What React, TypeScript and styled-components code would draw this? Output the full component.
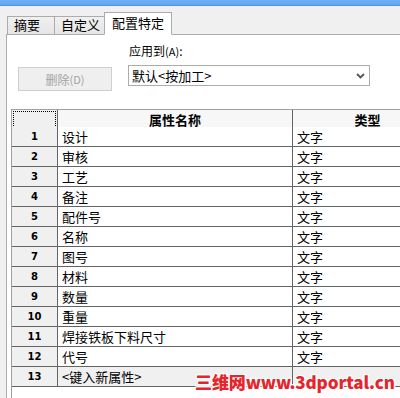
import React from "react";
import styled, { createGlobalStyle } from "styled-components";

const Global = createGlobalStyle`
  html, body { margin: 0; padding: 0; }
  body {
    width: 400px; height: 398px; overflow: hidden;
    background: #f0f0f0;
    font-family: "Noto Sans CJK SC", "Liberation Sans", sans-serif;
    font-size: 12px; color: #000;
  }
`;

const Window = styled.div`
  width: 400px; height: 398px; overflow: hidden; position: relative;
  display: flex; flex-direction: column;
`;

const TitleBar = styled.div`
  height: 6px; flex: none;
  background: linear-gradient(#6fb0f6, #62a6f2);
  border-bottom: 1px solid #4f94e2;
  box-sizing: border-box;
`;

const TabStrip = styled.div`
  height: 29px; flex: none; display: flex; align-items: flex-end;
  padding-left: 7px; box-sizing: border-box;
  position: relative; z-index: 1; margin-bottom: -1px;
`;

const Tab = styled.div<{ $active?: boolean; $w: number }>`
  width: ${(p) => p.$w}px; box-sizing: border-box;
  height: ${(p) => (p.$active ? 23 : 19)}px;
  border: 1px solid #acacac;
  border-bottom: ${(p) => (p.$active ? "1px solid #fff" : "1px solid #acacac")};
  margin-left: -1px;
  background: ${(p) => (p.$active ? "#fff" : "linear-gradient(#f0f0f0, #e5e5e5)")};
  font-size: 13px; line-height: ${(p) => (p.$active ? 19 : 16)}px;
  padding-left: ${(p) => (p.$active ? 7 : 6)}px;
  white-space: nowrap;
`;

const Panel = styled.div`
  flex: 1; background: #fff; margin-left: 6px;
  border-top: 1px solid #acacac; border-left: 1px solid #acacac;
  display: flex; flex-direction: column;
`;

const Controls = styled.div`
  display: flex; align-items: flex-start; height: 74px; flex: none;
`;

const DeleteButton = styled.div`
  margin: 32px 0 0 11px; width: 94px; height: 24px; box-sizing: border-box;
  border: 1px solid #cfcfcf; background: #efefef; color: #a3a3a3;
  display: flex; align-items: center; justify-content: center;
  font-size: 12px;
`;

const Small = styled.span`
  font-size: 11px;
`;

const ApplyGroup = styled.div`
  margin: 8px 0 0 16px; display: flex; flex-direction: column;
`;

const Label = styled.div`
  font-size: 12px; line-height: 16px; height: 22px; padding-left: 1px;
`;

const Combo = styled.div`
  width: 242px; height: 21px; box-sizing: border-box;
  border: 1px solid #acacac; background: #fff;
  display: flex; align-items: center; justify-content: space-between;
  padding: 0 4px 0 3px; font-size: 13px;
`;

const Grid = styled.div`
  margin-left: 4px; flex: 1;
  border-left: 1px solid #a0a0a0; border-top: 1px solid #a0a0a0;
  overflow: hidden;
`;

const Row = styled.div<{ $header?: boolean }>`
  display: grid; grid-template-columns: 46px 235px 150px;
  height: ${(p) => (p.$header ? 17 : 20)}px;
`;

const NumCell = styled.div<{ $corner?: boolean }>`
  background: #f0f0f0; box-sizing: border-box;
  border-right: 1px solid #646464; border-bottom: 1px solid #646464;
  display: flex; align-items: center; justify-content: center;
  font-family: "DejaVu Sans", sans-serif; font-weight: bold; font-size: 10px;
  position: relative;
  ${(p) => p.$corner && `
    &::after {
      content: ""; position: absolute; left: 1px; top: 1px; right: 1px; bottom: 1px;
      border: 1px dotted #000;
    }
  `}
`;

const HeadCell = styled.div`
  background: #f7f7f7; box-sizing: border-box;
  border-right: 1px solid #646464; border-bottom: 1px solid #646464;
  display: flex; align-items: center; justify-content: center;
  font-weight: bold; font-size: 13px;
`;

const DataCell = styled.div<{ $new?: boolean }>`
  background: ${(p) => (p.$new ? "#f0f0f0" : "#fff")};
  box-sizing: border-box;
  border-right: 1px solid #646464; border-bottom: 1px solid #646464;
  display: flex; align-items: center; padding-left: 4px;
  font-size: 13px; white-space: nowrap;
`;

const Watermark = styled.div`
  position: absolute; left: 195px; top: 369px;
  font-family: "Noto Sans CJK SC", "DejaVu Sans", sans-serif;
  font-weight: 900; font-size: 17px; color: #e4252b; letter-spacing: -0.1px;
  text-shadow: 1px 0 #fff, -1px 0 #fff, 0 1px #fff, 0 -1px #fff,
    1px 1px #fff, -1px -1px #fff, 1px -1px #fff, -1px 1px #fff;
  white-space: nowrap;
`;

const rows = [
  "设计", "审核", "工艺", "备注", "配件号", "名称", "图号",
  "材料", "数量", "重量", "焊接铁板下料尺寸", "代号",
];

export default function App() {
  return (
    <Window>
      <Global />
      <TitleBar />
      <TabStrip>
        <Tab $w={48} style={{ marginLeft: 0 }}>摘要</Tab>
        <Tab $w={51}>自定义</Tab>
        <Tab $w={68} $active>配置特定</Tab>
      </TabStrip>
      <Panel>
        <Controls>
          <DeleteButton>删除<Small>(D)</Small></DeleteButton>
          <ApplyGroup>
            <Label>应用到<Small>(A)</Small>:</Label>
            <Combo>
              <span>默认&lt;按加工&gt;</span>
              <svg width="9" height="6" viewBox="0 0 9 6">
                <path d="M1 1 L4.5 4.5 L8 1" fill="none" stroke="#555" strokeWidth="1.8" />
              </svg>
            </Combo>
          </ApplyGroup>
        </Controls>
        <Grid>
          <Row $header>
            <NumCell $corner />
            <HeadCell>属性名称</HeadCell>
            <HeadCell>类型</HeadCell>
          </Row>
          {rows.map((r, i) => (
            <Row key={i}>
              <NumCell>{i + 1}</NumCell>
              <DataCell>{r}</DataCell>
              <DataCell>文字</DataCell>
            </Row>
          ))}
          <Row>
            <NumCell>13</NumCell>
            <DataCell $new>&lt;键入新属性&gt;</DataCell>
            <DataCell $new />
          </Row>
        </Grid>
      </Panel>
      <Watermark>三维网www.3dportal.cn</Watermark>
    </Window>
  );
}
